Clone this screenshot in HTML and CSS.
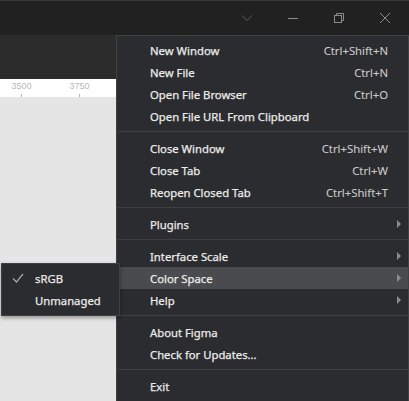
FILE: index.html
```html
<!DOCTYPE html>
<html>
<head>
<meta charset="utf-8">
<link rel="stylesheet" href="styles.css">
</head>
<body>
<div class="app">
  <div class="titlebar">
    <div class="tb-icons">
      <svg class="ic ic-chev" width="12" height="8" viewBox="0 0 12 8"><path d="M1 1.5 L6 6.5 L11 1.5" fill="none" stroke="#5c5c5c" stroke-width="1"/></svg>
      <svg class="ic" width="12" height="12" viewBox="0 0 12 12"><path d="M1 6.5 H11" stroke="#8c8c8c" stroke-width="1"/></svg>
      <svg class="ic" width="12" height="12" viewBox="0 0 12 12"><rect x="1.5" y="3.5" width="7" height="7" fill="none" stroke="#8c8c8c"/><path d="M3.5 3.5 V1.5 H10.5 V8.5 H8.5" fill="none" stroke="#8c8c8c"/></svg>
      <svg class="ic" width="12" height="12" viewBox="0 0 12 12"><path d="M1 1 L11 11 M11 1 L1 11" stroke="#8c8c8c" stroke-width="1"/></svg>
    </div>
  </div>
  <div class="toolbar"></div>
  <div class="ruler">
    <div class="mark"><span>3500</span><i></i></div>
    <div class="mark"><span>3750</span><i></i></div>
  </div>
  <div class="canvas"></div>

  <div class="menu">
    <div class="item"><span class="label">New Window</span><span class="sc">Ctrl+Shift+N</span></div>
    <div class="item"><span class="label">New File</span><span class="sc">Ctrl+N</span></div>
    <div class="item"><span class="label">Open File Browser</span><span class="sc">Ctrl+O</span></div>
    <div class="item"><span class="label">Open File URL From Clipboard</span></div>
    <div class="sep"></div>
    <div class="item"><span class="label">Close Window</span><span class="sc">Ctrl+Shift+W</span></div>
    <div class="item"><span class="label">Close Tab</span><span class="sc">Ctrl+W</span></div>
    <div class="item"><span class="label">Reopen Closed Tab</span><span class="sc">Ctrl+Shift+T</span></div>
    <div class="sep"></div>
    <div class="item sub"><span class="label">Plugins</span><span class="arrow"></span></div>
    <div class="sep"></div>
    <div class="item sub"><span class="label">Interface Scale</span><span class="arrow"></span></div>
    <div class="item sub active"><span class="label">Color Space</span><span class="arrow"></span></div>
    <div class="item sub"><span class="label">Help</span><span class="arrow"></span></div>
    <div class="sep"></div>
    <div class="item"><span class="label">About Figma</span></div>
    <div class="item"><span class="label">Check for Updates...</span></div>
    <div class="sep"></div>
    <div class="item"><span class="label">Exit</span></div>
  </div>

  <div class="submenu">
    <div class="sitem"><span class="check"><svg width="12" height="10" viewBox="0 0 12 10"><path d="M1 5.5 L4.5 9 L11 1" fill="none" stroke="#a8a8a8" stroke-width="1.2"/></svg></span><span class="label">sRGB</span></div>
    <div class="sitem"><span class="check"></span><span class="label">Unmanaged</span></div>
  </div>
</div>
</body>
</html>
```

FILE: styles.css
```css
html, body {
  margin: 0;
  padding: 0;
}
body {
  width: 409px;
  height: 401px;
  overflow: hidden;
  font-family: "Noto Sans", "Open Sans", sans-serif;
  font-size: 11.3px;
}
.app {
  position: relative;
  display: flex;
  flex-direction: column;
  height: 401px;
  background: #e5e5e5;
}
.titlebar {
  height: 34px;
  background: #212121;
  border-top: 1px solid #3a3a3a;
  display: flex;
  justify-content: flex-end;
  align-items: center;
}
.tb-icons {
  display: flex;
  align-items: center;
  gap: 34px;
  padding-right: 18px;
}
.ic { display: block; }
.toolbar {
  height: 44px;
  background: #2c2c2c;
}
.ruler {
  height: 18px;
  background: #ffffff;
  display: flex;
  padding-left: 10px;
  gap: 35px;
}
.mark {
  position: relative;
  width: 23px;
  display: flex;
  flex-direction: column;
  align-items: center;
}
.mark span {
  font-family: "Liberation Sans", sans-serif;
  font-size: 9px;
  color: #b8b8b8;
  line-height: 12px;
  margin-top: 1px;
  -webkit-text-stroke: 0;
}
.mark i {
  display: block;
  width: 1px;
  height: 3px;
  background: #b8b8b8;
  margin-top: 2px;
}
.canvas {
  flex: 1;
  background: #e5e5e5;
}
.menu {
  position: absolute;
  left: 116px;
  top: 35px;
  width: 291px;
  padding: 3px 0 4px;
  background: #2b2c2f;
  border: 1px solid #404144;
  -webkit-text-stroke: 0.25px;
}
.item {
  height: 22px;
  display: flex;
  align-items: center;
  padding: 0 20px 0 33px;
  color: #ebebeb;
}
.item .label { flex: 1; }
.item .sc { color: #c9c9c9; -webkit-text-stroke: 0.1px; }
.item.active { background: #4a4b4e; }
.item.sub { padding-right: 7px; }
.arrow {
  width: 0;
  height: 0;
  border-left: 4px solid #8c8c8c;
  border-top: 4px solid transparent;
  border-bottom: 4px solid transparent;
}
.sep {
  height: 1px;
  background: #3e3f42;
  margin: 4px 0 5px;
}
.submenu {
  position: absolute;
  left: 1px;
  top: 263px;
  width: 117px;
  padding: 3px 0 4px;
  background: #2b2c2f;
  border: 1px solid #404144;
  box-shadow: 0 2px 4px rgba(0,0,0,0.35);
  -webkit-text-stroke: 0.25px;
}
.sitem {
  height: 22px;
  display: flex;
  align-items: center;
  color: #ebebeb;
}
.check {
  width: 33px;
  padding-left: 10px;
  box-sizing: border-box;
  display: flex;
  align-items: center;
}
```
